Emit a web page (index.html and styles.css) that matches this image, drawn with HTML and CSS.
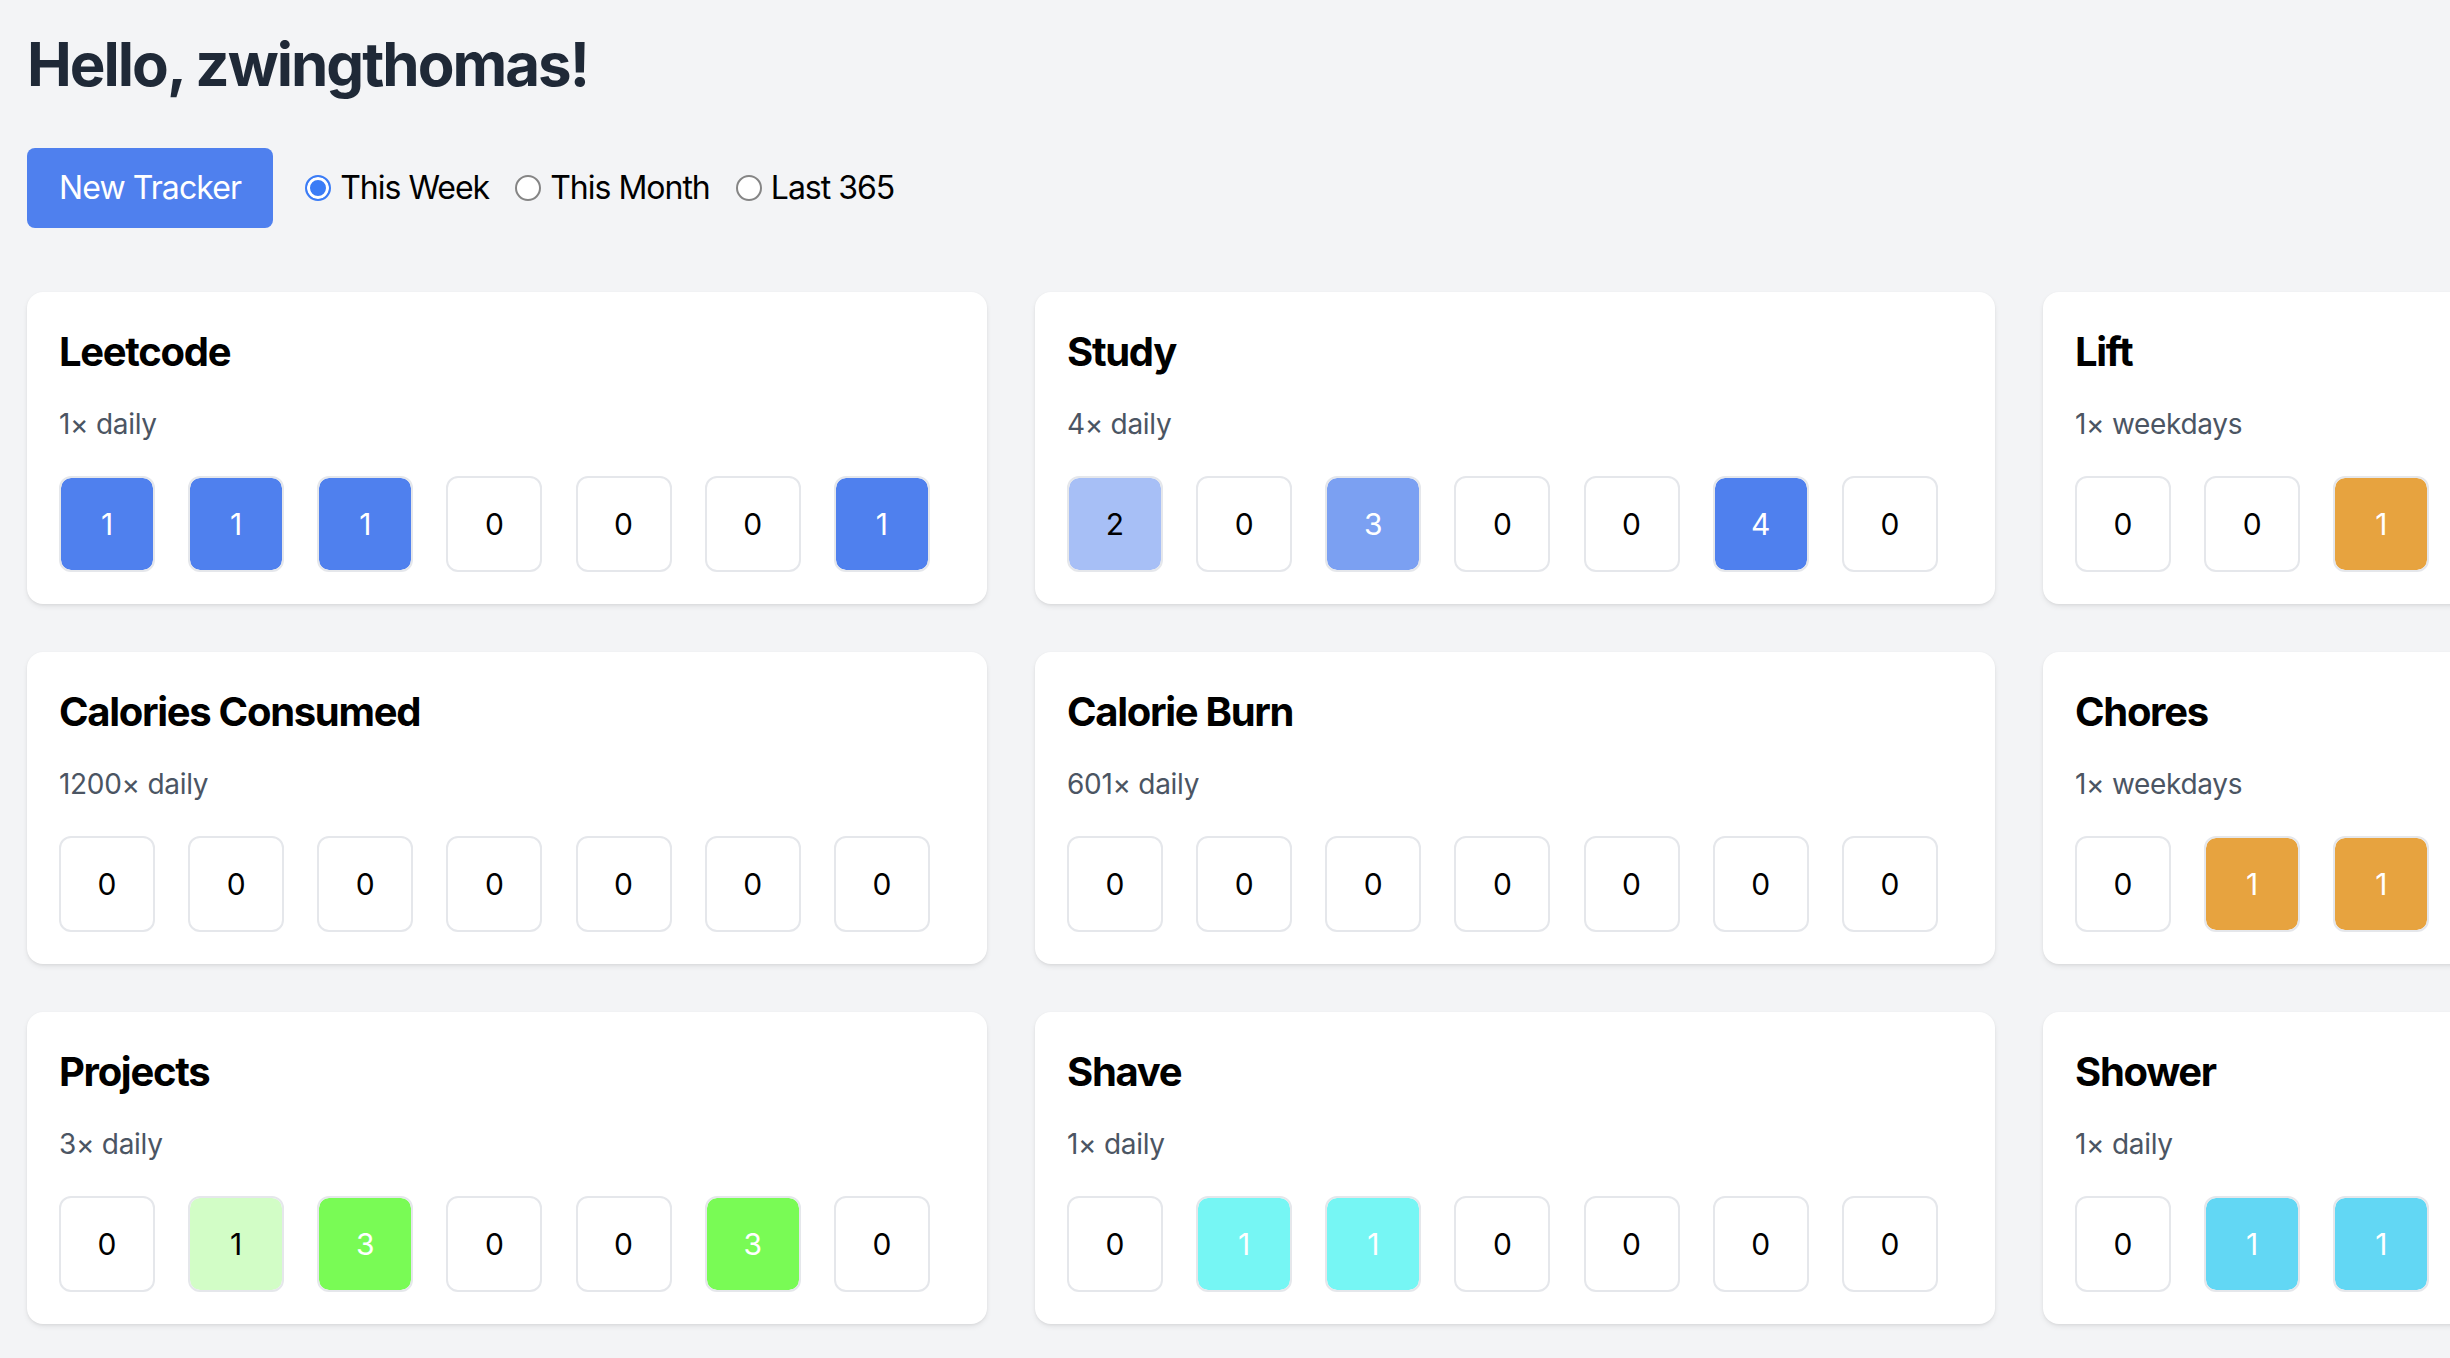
FILE: index.html
```html
<!DOCTYPE html>
<html lang="en">
<head>
<meta charset="utf-8">
<title>Trackers</title>
<link rel="stylesheet" href="styles.css">
</head>
<body>
<main class="page">
  <h1 class="greeting">Hello, zwingthomas!</h1>
  <div class="toolbar">
    <button class="btn-new">New Tracker</button>
    <div class="filters">
      <label class="option"><input type="radio" name="range" checked> This Week</label>
      <label class="option"><input type="radio" name="range"> This Month</label>
      <label class="option"><input type="radio" name="range"> Last 365</label>
    </div>
  </div>

  <section class="grid">
    <article class="card">
      <h2 class="card-title">Leetcode</h2>
      <p class="card-freq">1× daily</p>
      <div class="days">
        <div class="day blue full">1</div>
        <div class="day blue full">1</div>
        <div class="day blue full">1</div>
        <div class="day">0</div>
        <div class="day">0</div>
        <div class="day">0</div>
        <div class="day blue full">1</div>
      </div>
    </article>

    <article class="card">
      <h2 class="card-title">Study</h2>
      <p class="card-freq">4× daily</p>
      <div class="days">
        <div class="day blue-50">2</div>
        <div class="day">0</div>
        <div class="day blue-75">3</div>
        <div class="day">0</div>
        <div class="day">0</div>
        <div class="day blue full">4</div>
        <div class="day">0</div>
      </div>
    </article>

    <article class="card">
      <h2 class="card-title">Lift</h2>
      <p class="card-freq">1× weekdays</p>
      <div class="days">
        <div class="day">0</div>
        <div class="day">0</div>
        <div class="day orange full">1</div>
        <div class="day">0</div>
        <div class="day">0</div>
        <div class="day">0</div>
        <div class="day">0</div>
      </div>
    </article>

    <article class="card">
      <h2 class="card-title">Calories Consumed</h2>
      <p class="card-freq">1200× daily</p>
      <div class="days">
        <div class="day">0</div>
        <div class="day">0</div>
        <div class="day">0</div>
        <div class="day">0</div>
        <div class="day">0</div>
        <div class="day">0</div>
        <div class="day">0</div>
      </div>
    </article>

    <article class="card">
      <h2 class="card-title">Calorie Burn</h2>
      <p class="card-freq">601× daily</p>
      <div class="days">
        <div class="day">0</div>
        <div class="day">0</div>
        <div class="day">0</div>
        <div class="day">0</div>
        <div class="day">0</div>
        <div class="day">0</div>
        <div class="day">0</div>
      </div>
    </article>

    <article class="card">
      <h2 class="card-title">Chores</h2>
      <p class="card-freq">1× weekdays</p>
      <div class="days">
        <div class="day">0</div>
        <div class="day orange full">1</div>
        <div class="day orange full">1</div>
        <div class="day">0</div>
        <div class="day">0</div>
        <div class="day">0</div>
        <div class="day">0</div>
      </div>
    </article>

    <article class="card">
      <h2 class="card-title">Projects</h2>
      <p class="card-freq">3× daily</p>
      <div class="days">
        <div class="day">0</div>
        <div class="day green-33">1</div>
        <div class="day green full">3</div>
        <div class="day">0</div>
        <div class="day">0</div>
        <div class="day green full">3</div>
        <div class="day">0</div>
      </div>
    </article>

    <article class="card">
      <h2 class="card-title">Shave</h2>
      <p class="card-freq">1× daily</p>
      <div class="days">
        <div class="day">0</div>
        <div class="day cyan full">1</div>
        <div class="day cyan full">1</div>
        <div class="day">0</div>
        <div class="day">0</div>
        <div class="day">0</div>
        <div class="day">0</div>
      </div>
    </article>

    <article class="card">
      <h2 class="card-title">Shower</h2>
      <p class="card-freq">1× daily</p>
      <div class="days">
        <div class="day">0</div>
        <div class="day sky full">1</div>
        <div class="day sky full">1</div>
        <div class="day">0</div>
        <div class="day">0</div>
        <div class="day">0</div>
        <div class="day">0</div>
      </div>
    </article>
  </section>
</main>
</body>
</html>
```

FILE: styles.css
```css
html, body {
  margin: 0;
  padding: 0;
  overflow: hidden;
}

body {
  background: #f3f4f6;
  font-family: Inter, "Noto Sans", "Liberation Sans", sans-serif;
  color: #000;
}

.page {
  padding: 28px 27px;
  width: max-content;
}

.greeting {
  margin: 0 0 48px;
  font-size: 60px;
  line-height: 72px;
  font-weight: 700;
  color: #1f2937;
  letter-spacing: -2px;
}

.toolbar {
  display: flex;
  align-items: center;
}

.btn-new {
  height: 80px;
  padding: 0 32px;
  border: none;
  border-radius: 8px;
  background: #4f80ee;
  color: #fff;
  font-family: inherit;
  font-size: 32px;
  line-height: 48px;
  letter-spacing: -0.9px;
}

.filters {
  display: flex;
  align-items: center;
  gap: 26px;
  margin-left: 32px;
}

.option {
  display: flex;
  align-items: center;
  gap: 9px;
  font-size: 32px;
  line-height: 48px;
  color: #000;
  letter-spacing: -1px;
}

.option input {
  appearance: none;
  -webkit-appearance: none;
  margin: 0;
  width: 26px;
  height: 26px;
  border-radius: 50%;
  border: 2px solid #858585;
  background: #fff;
  box-sizing: border-box;
}

.option input:checked {
  border-color: #3b7cf6;
  background: #3b7cf6;
  box-shadow: inset 0 0 0 3px #fff;
}

.grid {
  display: grid;
  grid-template-columns: repeat(3, 960px);
  gap: 48px;
  margin-top: 64px;
}

.card {
  background: #fff;
  border-radius: 16px;
  padding: 32px;
  box-shadow: 0 3px 6px -1px rgba(0, 0, 0, 0.09), 0 1px 3px rgba(0, 0, 0, 0.05);
}

.card-title {
  margin: 0;
  font-size: 40px;
  line-height: 56px;
  font-weight: 700;
  color: #000;
  letter-spacing: -1.3px;
}

.card-freq {
  margin: 24px 0 32px;
  font-size: 28px;
  line-height: 40px;
  color: #4b5563;
  letter-spacing: -0.3px;
}

.days {
  display: grid;
  grid-template-columns: repeat(7, 1fr);
  gap: 8px;
}

.day {
  width: 96px;
  height: 96px;
  box-sizing: border-box;
  border: 2px solid #e5e7eb;
  border-radius: 12px;
  display: flex;
  align-items: center;
  justify-content: center;
  font-size: 30px;
  color: #000;
  background-clip: padding-box;
}

.day.full { color: #fff; }
.day.blue { background-color: #4f80ee; }
.day.blue-75 { background-color: #7ba0f2; color: #fff; }
.day.blue-50 { background-color: #a7bff6; color: #000; }
.day.orange { background-color: #e7a33f; }
.day.green { background-color: #79fb55; }
.day.green-33 { background-color: #d2fdc6; color: #000; }
.day.cyan { background-color: #76f6f4; }
.day.sky { background-color: #62d7f4; }
```
